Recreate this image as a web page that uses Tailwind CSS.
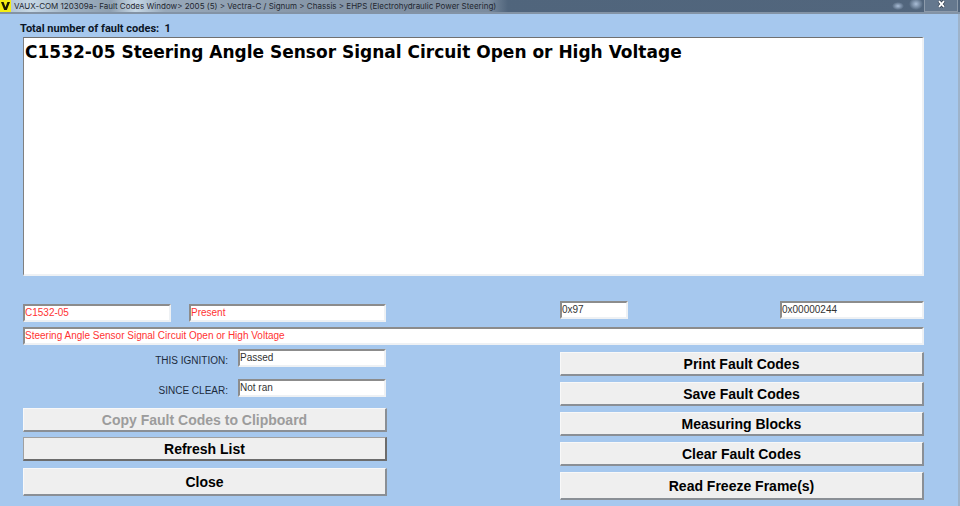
<!DOCTYPE html>
<html lang="en">

<head>
  <meta charset="UTF-8">
  <meta name="viewport" content="width=device-width, initial-scale=1.0">
  <title>VAUX-COM Fault Codes Window</title>
  <script src="https://cdn.jsdelivr.net/npm/@tailwindcss/browser@4"></script>
</head>

<body class="min-h-screen flex flex-col bg-[#a6c8ee] font-['Liberation_Sans',Arial,sans-serif] text-[10px] text-[#1c2b3d]">
  <header class="h-[14px] shrink-0 flex items-center bg-linear-to-r from-[#8496a8] via-[#50657c] to-[#52667d] border-b-2 border-[#8393a5]">
    <svg class="w-[11px] h-[12px] shrink-0" viewBox="0 0 11 12" aria-hidden="true">
      <rect width="11" height="12" fill="#f5ee12" />
      <path d="M1 2H3.6L5.5 7.2L7.4 2H10L6.8 10H4.2Z" fill="#1b1b00" />
    </svg>
    <div class="h-full flex items-center pl-[3px] pr-3 bg-[linear-gradient(90deg,#b4c6d6_0%,#c6d8e6_4%,#9fb1c2_12%,#8fa0b1_20%,#c6d8e6_25%,#98a9ba_31%,#8797a9_60%,#7b8c9f_96%,transparent_100%)]">
      <h1 class="font-['Inter','Noto_Sans',sans-serif] text-[8px] leading-[12px] whitespace-nowrap text-[#1f2730]">VAUX-COM 120309a- Fault Codes Window&gt; 2005 (5) &gt; Vectra-C / Signum &gt; Chassis &gt; EHPS (Electrohydraulic Power Steering)</h1>
    </div>
    <div class="ml-auto h-full flex items-center">
      <svg class="w-10 h-[12px]" viewBox="0 0 40 12" aria-hidden="true">
        <defs>
          <radialGradient id="glow">
            <stop offset="0" stop-color="#a9bdd6" />
            <stop offset="1" stop-color="#a9bdd6" stop-opacity="0" />
          </radialGradient>
        </defs>
        <ellipse cx="14" cy="6" rx="6" ry="4" fill="url(#glow)" />
        <ellipse cx="32" cy="4" rx="7" ry="6" fill="url(#glow)" />
      </svg>
      <button type="button" aria-label="Close window" class="w-[34px] h-[12px] flex justify-center items-start border-x border-b border-[#8d9bab] bg-[#65788e]">
        <svg class="w-[9px] h-[8px]" viewBox="0 0 9 8" aria-hidden="true">
          <path d="M2 1L7 7M7 1L2 7" stroke="#3a4656" stroke-width="3.4" />
          <path d="M2 1.2L7 6.8M7 1.2L2 6.8" stroke="#fff" stroke-width="1.8" />
        </svg>
      </button>
      <div class="w-[2px]"></div>
    </div>
  </header>

  <main class="grow pl-[23px] pr-[34px] pt-2 border-r-2 border-[#9eb3ca]">
    <label for="codes" class="block -ml-[3px] h-[15px] leading-[14px] font-['Roboto',sans-serif] text-[11px] font-bold text-[#0b1626] whitespace-pre">Total number of fault codes:  1</label>
    <select id="codes" size="8" class="block w-full h-[239px] bg-white overflow-hidden text-black border-t border-l border-r-2 border-b-2 border-t-[#707070] border-l-[#808080] border-r-[#eef1f4] border-b-[#eef1f4]">
      <option class="pt-1 px-px font-['DejaVu_Sans',sans-serif] text-[17px] leading-[20px] font-bold">C1532-05 Steering Angle Sensor Signal Circuit Open or High Voltage</option>
    </select>

    <div class="mt-[25px] grid grid-cols-2 gap-x-[173px]">
      <div class="flex gap-[18px] pt-[3px] pr-px">
        <input type="text" aria-label="Fault code" value="C1532-05" readonly class="w-[148px] h-[18px] px-0 pb-px bg-white text-[#ff3333] border-2 border-t-[#8c8c8c] border-l-[#8c8c8c] border-r-[#eef1f4] border-b-[#eef1f4]">
        <input type="text" aria-label="Status" value="Present" readonly class="grow min-w-0 h-[18px] px-0 pb-px bg-white text-[#ff3333] border-2 border-t-[#8c8c8c] border-l-[#8c8c8c] border-r-[#eef1f4] border-b-[#eef1f4]">
      </div>
      <div class="flex justify-between">
        <input type="text" aria-label="Status byte" value="0x97" readonly class="w-[68px] h-[18px] px-0 pb-px bg-white text-[#333333] border-2 border-t-[#8c8c8c] border-l-[#8c8c8c] border-r-[#eef1f4] border-b-[#eef1f4]">
        <input type="text" aria-label="Address" value="0x00000244" readonly class="w-[144px] h-[18px] px-0 pb-px bg-white text-[#333333] border-2 border-t-[#8c8c8c] border-l-[#8c8c8c] border-r-[#eef1f4] border-b-[#eef1f4]">
      </div>
    </div>
    <input type="text" aria-label="Description" value="Steering Angle Sensor Signal Circuit Open or High Voltage" readonly class="block mt-[5px] w-full h-[18px] px-0 pb-px bg-white text-[#ff3333] border-2 border-t-[#8c8c8c] border-l-[#8c8c8c] border-r-[#eef1f4] border-b-[#eef1f4]">

    <div class="mt-1 grid grid-cols-2 gap-x-[173px]">
      <div class="flex flex-col">
        <div class="flex justify-end gap-[10px] pr-px">
          <label for="ignition" class="pt-[5px] leading-[14px]">THIS IGNITION:</label>
          <input id="ignition" type="text" value="Passed" readonly class="w-[148px] h-[18px] px-0 pb-px bg-white text-[#333333] border-2 border-t-[#8c8c8c] border-l-[#8c8c8c] border-r-[#eef1f4] border-b-[#eef1f4]">
        </div>
        <div class="mt-[11px] flex justify-end gap-[10px] pr-px">
          <label for="clear" class="pt-[5px] leading-[14px]">SINCE CLEAR:</label>
          <input id="clear" type="text" value="Not ran" readonly class="w-[148px] h-[18px] px-0 pb-px bg-white text-[#333333] border-2 border-t-[#8c8c8c] border-l-[#8c8c8c] border-r-[#eef1f4] border-b-[#eef1f4]">
        </div>
        <button type="button" disabled class="mt-[10px] h-6 text-[14px] leading-[20px] font-bold text-[#9c9c9c] bg-[#efefef] border-t border-l border-r-2 border-b-2 border-t-[#f8f8f8] border-l-[#f8f8f8] border-r-[#8a8f95] border-b-[#8a8f95]">Copy Fault Codes to Clipboard</button>
        <button type="button" class="mt-[5px] h-6 text-[14px] leading-[20px] font-bold text-black bg-[#efefef] border-t border-l border-r-2 border-b-2 border-t-[#a0a0a0] border-l-[#a0a0a0] border-r-[#6c6c6c] border-b-[#6c6c6c]">Refresh List</button>
        <button type="button" class="mt-[7px] h-7 text-[14px] leading-[20px] font-bold text-black bg-[#efefef] border-t border-l border-r-2 border-b-2 border-t-[#f8f8f8] border-l-[#f8f8f8] border-r-[#8a8f95] border-b-[#8a8f95]">Close</button>
      </div>
      <div class="flex flex-col gap-[6px] pt-[3px]">
        <button type="button" class="h-6 text-[14px] leading-[20px] font-bold text-black bg-[#efefef] border-t border-l border-r-2 border-b-2 border-t-[#f8f8f8] border-l-[#f8f8f8] border-r-[#8a8f95] border-b-[#8a8f95]">Print Fault Codes</button>
        <button type="button" class="h-6 text-[14px] leading-[20px] font-bold text-black bg-[#efefef] border-t border-l border-r-2 border-b-2 border-t-[#f8f8f8] border-l-[#f8f8f8] border-r-[#8a8f95] border-b-[#8a8f95]">Save Fault Codes</button>
        <button type="button" class="h-6 text-[14px] leading-[20px] font-bold text-black bg-[#efefef] border-t border-l border-r-2 border-b-2 border-t-[#f8f8f8] border-l-[#f8f8f8] border-r-[#8a8f95] border-b-[#8a8f95]">Measuring Blocks</button>
        <button type="button" class="h-6 text-[14px] leading-[20px] font-bold text-black bg-[#efefef] border-t border-l border-r-2 border-b-2 border-t-[#f8f8f8] border-l-[#f8f8f8] border-r-[#8a8f95] border-b-[#8a8f95]">Clear Fault Codes</button>
        <button type="button" class="h-7 text-[14px] leading-[20px] font-bold text-black bg-[#efefef] border-t border-l border-r-2 border-b-2 border-t-[#f8f8f8] border-l-[#f8f8f8] border-r-[#8a8f95] border-b-[#8a8f95]">Read Freeze Frame(s)</button>
      </div>
    </div>
  </main>
</body>

</html>
